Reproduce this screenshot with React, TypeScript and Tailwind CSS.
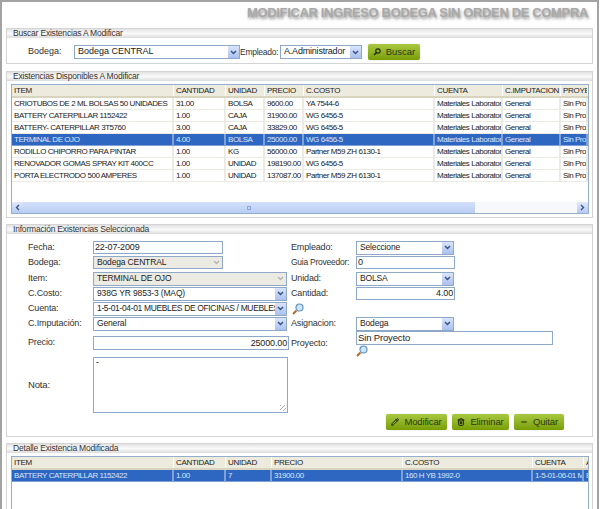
import { ReactNode } from 'react';
import { Pencil, Trash2, Minus } from 'lucide-react';

const stockCols = 'grid grid-cols-[162px_52px_39px_39px_131px_68px_58px_27px]';
const detailCols = 'grid grid-cols-[162px_52px_46px_131px_130px_51px_10px]';

const stockHeaders = ['ITEM', 'CANTIDAD', 'UNIDAD', 'PRECIO', 'C.COSTO', 'CUENTA', 'C.IMPUTACION', 'PROYECTO'];
const detailHeaders = ['ITEM', 'CANTIDAD', 'UNIDAD', 'PRECIO', 'C.COSTO', 'CUENTA', 'A'];

const stockRows = [
  ['CRIOTUBOS DE 2 ML BOLSAS 50 UNIDADES', '31.00', 'BOLSA', '9600.00', 'YA 7544-6'],
  ['BATTERY CATERPILLAR 1152422', '1.00', 'CAJA', '31900.00', 'WG 6456-5'],
  ['BATTERY- CATERPILLAR 3T5760', '3.00', 'CAJA', '33829.00', 'WG 6456-5'],
  ['TERMINAL DE OJO', '4.00', 'BOLSA', '25000.00', 'WG 6456-5'],
  ['RODILLO CHIPORRO PARA PINTAR', '1.00', 'KG', '56000.00', 'Partner M59 ZH 6130-1'],
  ['RENOVADOR GOMAS SPRAY KIT 400CC', '1.00', 'UNIDAD', '198190.00', 'WG 6456-5'],
  ['PORTA ELECTRODO 500 AMPERES', '1.00', 'UNIDAD', '137087.00', 'Partner M59 ZH 6130-1'],
];

function Panel({ title, className, children }: { title: string; className: string; children: ReactNode }) {
  return (
    <section className={`border border-[#d4d4d4] bg-white ${className}`}>
      <h2 className="h-[9px] bg-gradient-to-b from-[#e2e2e2] via-[#fafafa] to-[#dcdcdc] pl-[6px] text-[8.5px] leading-[9px] font-normal tracking-[-0.2px] text-[#333] whitespace-nowrap">
        {title}
      </h2>
      {children}
    </section>
  );
}

function Chevron({ muted }: { muted?: boolean }) {
  return (
    <svg width="7" height="5" viewBox="0 0 7 5">
      <path d="M1 1l2.5 2.5L6 1" fill="none" stroke={muted ? '#b5b5b5' : '#33507f'} strokeWidth="1.4" />
    </svg>
  );
}

function Select({ value, className, disabled }: { value: string; className: string; disabled?: boolean }) {
  return (
    <div
      className={`flex items-center border border-[#8ea9c8] pl-[3px] text-[#222] whitespace-nowrap overflow-hidden ${
        disabled ? 'bg-[#ecebe3]' : 'bg-white'
      } ${className}`}
    >
      <span className="flex-1 overflow-hidden">{value}</span>
      <span
        className={`flex h-full w-[11px] shrink-0 items-center justify-center ${
          disabled ? 'bg-[#ecebe3]' : 'bg-gradient-to-b from-[#d9e5fa] to-[#aac0ee]'
        }`}
      >
        <Chevron muted={disabled} />
      </span>
    </div>
  );
}

function TextBox({ value, className }: { value: string; className: string }) {
  return (
    <div className={`border border-[#8ea9c8] bg-white px-[1px] text-[#222] whitespace-nowrap ${className}`}>{value}</div>
  );
}

function Lens() {
  return (
    <svg width="12" height="12" viewBox="0 0 12 12">
      <path d="M1 11l3.5-3.5" stroke="#b4692a" strokeWidth="2" />
      <circle cx="7.5" cy="4.5" r="3.5" fill="#cfe6f8" stroke="#5f93c4" strokeWidth="1.2" />
    </svg>
  );
}

function GreenButton({ icon, label, className }: { icon: ReactNode; label: string; className: string }) {
  return (
    <button
      className={`flex h-[16px] items-center justify-center gap-[5px] rounded-[2px] bg-gradient-to-b from-[#a9c93f] to-[#789e00] text-[9.5px] text-[#2d3a10] shadow-[0_0_1px_#9a9a9a] ${className}`}
    >
      {icon}
      {label}
    </button>
  );
}

function Field({ label, labelWidth, className, children }: { label?: string; labelWidth: string; className: string; children: ReactNode }) {
  return (
    <div className={`flex items-center ${className}`}>
      <span className={`shrink-0 whitespace-nowrap text-[#333] ${labelWidth}`}>{label}</span>
      {children}
    </div>
  );
}

function Cell({ text, selected }: { text: string; selected: boolean }) {
  return (
    <div
      className={`h-[12px] overflow-hidden whitespace-nowrap border-r-2 border-b pl-[2px] text-[8px] leading-[12px] tracking-[-0.45px] ${
        selected ? 'border-[#7fa1d8] text-[#dbe6f7]' : 'border-[#ecebe3] text-[#222]'
      }`}
    >
      {text}
    </div>
  );
}

function HeaderRow({ cols, headers }: { cols: string; headers: string[] }) {
  return (
    <div className={`${cols} h-[13px] border-b-2 border-[#d8d4bd] bg-[#ecebdd]`}>
      {headers.map((h) => (
        <div key={h} className="overflow-hidden whitespace-nowrap border-r border-white pl-[2px] text-[8px] leading-[12px] tracking-[-0.3px] text-[#222]">
          {h}
        </div>
      ))}
    </div>
  );
}

export default function App() {
  return (
    <div className="h-[509px] w-[600px] overflow-hidden bg-white font-['Liberation_Sans',sans-serif]">
      <div className="h-[520px] w-[599px] border-x-2 border-t-2 border-[#a3a3a3] pl-[4px] pr-[4px]">
        <h1 className="flex h-[26px] items-center justify-end pr-[5px] pb-[4px] text-[13px] font-bold tracking-[-0.35px] text-[#a9a9a9] whitespace-nowrap [text-shadow:1px_2px_3px_#8c8c8c]">
          MODIFICAR INGRESO BODEGA SIN ORDEN DE COMPRA
        </h1>

        <Panel title="Buscar Existencias A Modificar" className="h-[36px] w-[587px]">
          <div className="flex items-center pt-[6px] text-[9px]">
            <span className="w-[67px] shrink-0 pl-[21px] text-[#333]">Bodega:</span>
            <Select value="Bodega CENTRAL" className="h-[14px] w-[166px]" />
            <span className="w-[40px] shrink-0 whitespace-nowrap text-[8.5px] tracking-[-0.25px] text-[#333]">Empleado:</span>
            <Select value="A.Administrador" className="h-[14px] w-[82px] tracking-[-0.2px]" />
            <GreenButton
              label="Buscar"
              className="ml-[6px] w-[52px]"
              icon={<svg width="8" height="8" viewBox="0 0 8 8"><circle cx="5" cy="3" r="2.2" fill="none" stroke="#1c2408" strokeWidth="1.2" /><path d="M3.3 4.7L1 7" stroke="#1c2408" strokeWidth="1.4" /></svg>}
            />
          </div>
        </Panel>

        <Panel title="Existencias Disponibles A Modificar" className="mt-[7px] h-[147px] w-[587px]">
          <div className="mx-[4px] mt-[3px] h-[130px] w-[578px] overflow-hidden border border-[#94aecb] flex flex-col">
            <HeaderRow cols={stockCols} headers={stockHeaders} />
            <div className="flex-1">
              {stockRows.map((row, i) => {
                const selected = i === 3;
                const cells = [...row, 'Materiales Laboratorio', 'General', 'Sin Proyecto'];
                return (
                  <div key={row[0]} className={`${stockCols} ${selected ? 'bg-[#2e67c2]' : 'bg-white'}`}>
                    {cells.map((c, j) => (
                      <Cell key={j} text={c} selected={selected} />
                    ))}
                  </div>
                );
              })}
            </div>
            <div className="flex h-[11px] bg-[#f7f8fb]">
              <div className="flex w-[11px] items-center justify-center bg-gradient-to-b from-[#e0e9fb] to-[#b5c9f3] text-[#33507f]">
                <svg width="5" height="7" viewBox="0 0 5 7"><path d="M4 1L1.5 3.5 4 6" fill="none" stroke="currentColor" strokeWidth="1.3" /></svg>
              </div>
              <div className="flex w-[452px] items-center justify-center bg-gradient-to-b from-[#d4e0fa] to-[#b9cdf5]">
                <span className="h-[4px] w-[4px] border border-[#8aa6dd]" />
              </div>
              <div className="flex-1" />
              <div className="flex w-[11px] items-center justify-center bg-gradient-to-b from-[#e0e9fb] to-[#b5c9f3] text-[#33507f]">
                <svg width="5" height="7" viewBox="0 0 5 7"><path d="M1 1l2.5 2.5L1 6" fill="none" stroke="currentColor" strokeWidth="1.3" /></svg>
              </div>
            </div>
          </div>
        </Panel>

        <Panel title="Información Existencias Seleccionada" className="mt-[6px] h-[213px] w-[587px]">
          <div className="flex pt-[6px] text-[8.5px] tracking-[-0.15px]">
            {/* left column */}
            <div className="w-[284px] shrink-0">
              <Field label="Fecha:" labelWidth="w-[86px] pl-[21px] text-[9px]" className="h-[15px]">
                <TextBox value="22-07-2009" className="h-[13px] w-[130px] text-[9px] leading-[11px]" />
              </Field>
              <Field label="Bodega:" labelWidth="w-[86px] pl-[21px] text-[9px]" className="h-[15px]">
                <Select value="Bodega CENTRAL" disabled className="h-[13px] w-[130px]" />
              </Field>
              <Field label="Item:" labelWidth="w-[86px] pl-[21px] text-[9px]" className="mt-px h-[15px]">
                <Select value="TERMINAL DE OJO" disabled className="h-[14px] w-[194px]" />
              </Field>
              <Field label="C.Costo:" labelWidth="w-[86px] pl-[21px] text-[9px]" className="h-[15px]">
                <Select value="938G YR 9853-3 (MAQ)" className="h-[14px] w-[194px]" />
              </Field>
              <Field label="Cuenta:" labelWidth="w-[86px] pl-[21px] text-[9px]" className="h-[15px]">
                <Select value="1-5-01-04-01 MUEBLES DE OFICINAS / MUEBLES" className="h-[14px] w-[194px] tracking-[-0.35px]" />
              </Field>
              <Field label="C.Imputación:" labelWidth="w-[86px] pl-[21px] text-[9px]" className="h-[15px]">
                <Select value="General" className="h-[14px] w-[194px]" />
              </Field>
              <Field label="Precio:" labelWidth="w-[86px] pl-[21px] text-[9px]" className="mt-[4px] h-[15px]">
                <TextBox value="25000.00" className="h-[14px] w-[196px] text-right text-[9px] leading-[12px]" />
              </Field>
              <Field label="Nota:" labelWidth="w-[86px] pl-[21px] text-[9.5px]" className="mt-[7px] h-[56px]">
                <div className="relative h-[56px] w-[195px] border border-[#8ea9c8] bg-white pl-[2px] leading-[9px]">
                  -
                  <span className="absolute bottom-[1px] right-[1px] h-[6px] w-[6px] bg-[repeating-linear-gradient(135deg,#aaa_0_1px,transparent_1px_3px)]" />
                </div>
              </Field>
            </div>

            {/* right column */}
            <div className="flex-1">
              <Field label="Empleado:" labelWidth="w-[65px] text-[9px]" className="h-[15px]">
                <Select value="Seleccione" className="h-[14px] w-[98px]" />
              </Field>
              <Field label="Guia Proveedor:" labelWidth="w-[65px] text-[8.5px] tracking-[-0.25px]" className="h-[15px]">
                <TextBox value="0" className="h-[13px] w-[99px] text-[9px] leading-[11px]" />
              </Field>
              <Field label="Unidad:" labelWidth="w-[65px] text-[9px]" className="mt-px h-[15px]">
                <Select value="BOLSA" className="h-[14px] w-[98px]" />
              </Field>
              <Field label="Cantidad:" labelWidth="w-[65px] text-[9px]" className="h-[15px]">
                <TextBox value="4.00" className="h-[13px] w-[99px] text-right text-[9px] leading-[11px]" />
              </Field>
              <div className="flex h-[15px] items-center pl-[1px]">
                <Lens />
              </div>
              <Field label="Asignacion:" labelWidth="w-[65px] text-[9px]" className="h-[15px]">
                <Select value="Bodega" className="h-[14px] w-[98px]" />
              </Field>
              <Field label="Proyecto:" labelWidth="w-[65px] pt-[6px] text-[9px]" className="h-[27px] items-start">
                <div>
                  <TextBox value="Sin Proyecto" className="h-[14px] w-[197px] text-[9.5px] leading-[11px]" />
                  <Lens />
                </div>
              </Field>
              <div className="mt-[56px] flex gap-[5px] pl-[95px]">
                <GreenButton label="Modificar" className="w-[61px]" icon={<Pencil size={8} strokeWidth={3} color="#1c2408" />} />
                <GreenButton label="Eliminar" className="w-[57px]" icon={<Trash2 size={8} strokeWidth={3} color="#1c2408" />} />
                <GreenButton label="Quitar" className="w-[50px]" icon={<Minus size={8} strokeWidth={3} color="#1c2408" />} />
              </div>
            </div>
          </div>
        </Panel>

        <Panel title="Detalle Existencia Modificada" className="mt-[6px] h-[80px] w-[587px]">
          <div className="mx-[4px] mt-[3px] h-[70px] w-[578px] overflow-hidden border border-[#94aecb]">
            <HeaderRow cols={detailCols} headers={detailHeaders} />
            <div className={`${detailCols} bg-[#2e67c2]`}>
              {['BATTERY CATERPILLAR 1152422', '1.00', '7', '31900.00', '160 H YB 1992-0', '1-5-01-06-01 M', 'B'].map((c, j) => (
                <Cell key={j} text={c} selected />
              ))}
            </div>
          </div>
        </Panel>
      </div>
    </div>
  );
}
